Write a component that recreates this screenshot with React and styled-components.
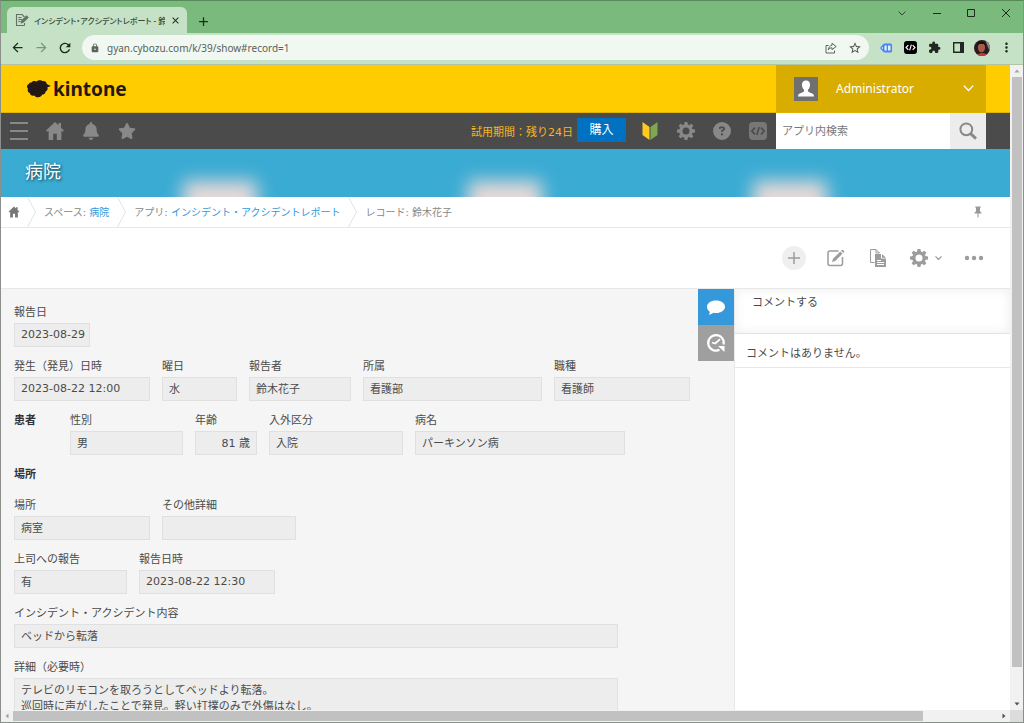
import React, { useState } from 'react';
import styled, { createGlobalStyle, css } from 'styled-components';
import {
  MdAdd, MdArrowBack, MdArrowForward, MdClose, MdExtension, MdLock, MdMoreVert, MdRefresh, MdStarBorder,
} from 'react-icons/md';
import { FaBell, FaStar, FaCircleQuestion } from 'react-icons/fa6';

const GlobalStyle = createGlobalStyle`
  * { box-sizing: border-box; }
  body {
    margin: 0;
    overflow: hidden;
    font-family: "DejaVu Sans", "Noto Sans CJK JP", sans-serif;
    font-size: 11px;
    color: #4b4b4b;
  }
  button, input, textarea { font: inherit; color: inherit; border: 0; border-radius: 0; margin: 0; padding: 0; }
  button { background: none; cursor: pointer; }
  a { text-decoration: none; }
  svg { display: block; flex: none; }
`;

/* ---------- browser ---------- */

const BrowserWindow = styled.div`
  display: flex;
  flex-direction: column;
  height: 100vh;
  border: 1px solid #8b8f8b;
  border-top-color: #568a59;
`;

const TabStrip = styled.div`
  display: flex;
  align-items: flex-end;
  height: 32px;
  flex: none;
  padding-left: 6px;
  background: #7abb7d;
`;

const Tab = styled.div`
  display: flex;
  align-items: center;
  gap: 5px;
  width: 180px;
  height: 26px;
  padding: 0 7px 0 8px;
  border-radius: 6px 6px 0 0;
  background: #c5e2c6;
`;

const TabTitle = styled.span`
  flex: 1;
  overflow: hidden;
  white-space: nowrap;
  font-family: "Noto Sans", "Noto Sans CJK JP", sans-serif;
  font-size: 8px;
  font-weight: 500;
  font-feature-settings: "palt";
  color: #3c4a3d;
`;

const ChromeButton = styled.button`
  display: grid;
  place-items: center;
  width: ${({ $w }) => $w || 24}px;
  height: 24px;
  flex: none;
  color: ${({ $color }) => $color || '#202821'};
`;

const WindowControls = styled.div`
  display: flex;
  align-self: flex-start;
  margin-left: auto;
`;

const AddressRow = styled.div`
  display: flex;
  align-items: center;
  height: 31px;
  flex: none;
  padding: 0 5px 2px 4px;
  background: #c5e2c6;
`;

const AddressBar = styled.div`
  display: flex;
  align-items: center;
  flex: 1;
  height: 25px;
  margin: 0 5px;
  padding: 0 2px 0 8px;
  border-radius: 13px;
  background: #f0f8f1;
  color: #5c645d;
`;

const AddressInput = styled.input`
  flex: 1;
  min-width: 0;
  margin-left: 7px;
  background: transparent;
  font-family: "Noto Sans", sans-serif;
  font-size: 10px;
  color: #59625a;
  outline: 0;
`;

const Avatar = styled.svg`
  width: 16px;
  height: 16px;
  border-radius: 50%;
`;

const Viewport = styled.div`
  display: flex;
  flex: 1;
  min-height: 0;
  border-top: 1px solid #b3c4a0;
`;

const Page = styled.div`
  display: flex;
  flex-direction: column;
  flex: 1;
  min-width: 0;
  background: #fff;
`;

const ScrollTrack = styled.div`
  display: flex;
  align-items: center;
  flex: none;
  background: #f1f1f1;
  ${({ $vertical }) => ($vertical ? css`
    flex-direction: column;
    width: 13px;
  ` : css`
    height: 12px;
  `)}
`;

const ScrollThumb = styled.div`
  background: #c1c1c1;
  flex: ${({ $size }) => $size} 0 0;
  ${({ $vertical }) => ($vertical ? 'width: 10px;' : 'height: 10px;')}
`;

const ScrollRest = styled.div`
  flex: ${({ $size }) => $size} 0 0;
`;

const BottomScroll = styled.div`
  display: flex;
  flex: none;
`;

const ScrollCorner = styled.div`
  width: 13px;
  background: #dcdcdc;
`;

/* ---------- kintone header ---------- */

const BrandBar = styled.header`
  display: flex;
  height: 48px;
  flex: none;
  padding-right: 24px;
  background: #ffcc00;
  border-bottom: 1px solid #dfb300;
`;

const Logo = styled.a`
  display: flex;
  align-items: center;
  gap: 2px;
  padding-left: 26px;
  font-family: "Noto Sans", sans-serif;
  font-size: 19px;
  font-weight: 700;
  line-height: 24px;
  color: #231815;
`;

const UserMenu = styled.button`
  display: flex;
  align-items: center;
  width: 210px;
  margin-left: auto;
  padding: 0 12px 0 18px;
  background: #d9ad00;
  font-family: "Noto Sans", sans-serif;
  font-size: 12px;
  color: #fff;
  text-align: left;
`;

const UserName = styled.span`
  flex: 1;
  padding-left: 18px;
`;

const NavBar = styled.nav`
  display: flex;
  align-items: center;
  height: 36px;
  flex: none;
  padding-right: 24px;
  background: #4b4b4b;
`;

const NavButton = styled.button`
  display: grid;
  place-items: center;
  width: 36px;
  height: 36px;
  color: #888;
`;

const Trial = styled.span`
  margin-left: auto;
  color: #f5b51d;
`;

const BuyButton = styled.button`
  width: 49px;
  height: 24px;
  margin: 0 6px 2px 4px;
  background: #0072c1;
  font-size: 12px;
  line-height: 22px;
  color: #fff;
`;

const Search = styled.form`
  display: flex;
  width: 210px;
  height: 36px;
`;

const SearchInput = styled.input`
  flex: 1;
  min-width: 0;
  padding: 0 6px;
  background: #fff;
  &::placeholder { color: #777; opacity: 1; }
`;

const SearchButton = styled.button`
  display: grid;
  place-items: center;
  width: 36px;
  background: #ececec;
  color: #888;
`;

const Banner = styled.div`
  position: relative;
  display: flex;
  align-items: center;
  height: 48px;
  flex: none;
  padding: 0 24px 6px;
  overflow: hidden;
  background: #3aabd3;
`;

const BannerArt = styled.svg`
  position: absolute;
  inset: 0;
`;

const BannerTitle = styled.h1`
  position: relative;
  margin: 0;
  font-size: 18px;
  font-weight: 400;
  color: #fff;
  text-shadow: 1px 1px 3px rgba(0, 0, 0, 0.7);
`;

const Breadcrumbs = styled.nav`
  display: flex;
  align-items: center;
  height: 31px;
  flex: none;
  padding: 0 24px 0 7px;
  border-bottom: 1px solid #e8e8e8;
  font-size: 10px;
  color: #888;
`;

const HomeLink = styled.a`
  padding-right: 7px;
  color: #777;
`;

const Crumb = styled.span`
  padding: 0 8px 2px;
  white-space: pre;
  a { color: #3498db; }
`;

const PinButton = styled.button`
  width: 12px;
  margin-left: auto;
  color: #999;
`;

const ActionBar = styled.div`
  display: flex;
  align-items: center;
  justify-content: flex-end;
  height: 61px;
  flex: none;
  padding-right: 24px;
  border-bottom: 1px solid #e8e8e8;
  color: #9c9c9c;
`;

const ActionButton = styled.button`
  display: flex;
  align-items: center;
  justify-content: center;
  gap: 7px;
  width: ${({ $w }) => $w || 24}px;
  height: 24px;
  margin-left: ${({ $gap }) => $gap || 18}px;
  border-radius: 12px;
  background: ${({ $filled }) => ($filled ? '#efefef' : 'none')};
`;

/* ---------- record ---------- */

const Content = styled.main`
  display: flex;
  flex: 1;
  min-height: 0;
`;

const Record = styled.section`
  flex: 1;
  min-width: 0;
  overflow: hidden;
  padding: 14px 0 0 13px;
  background: #f5f5f5;
`;

const FieldRow = styled.div`
  display: flex;
  gap: 12px;
  margin-bottom: 10px;
`;

const Heading = styled.h2`
  width: 44px;
  margin: 0;
  font-size: 11px;
  font-weight: 700;
  line-height: 19px;
  color: #333;
`;

const SectionHeading = styled(Heading)`
  width: auto;
  line-height: 20px;
  margin-bottom: 11px;
`;

const FieldBox = styled.div`
  flex: none;
  width: ${({ $w }) => $w}px;
`;

const FieldLabel = styled.label`
  display: block;
  height: 20px;
  line-height: 19px;
  white-space: nowrap;
`;

const valueStyle = css`
  display: block;
  width: 100%;
  border: 1px solid #e0e0e0;
  background: #ededed;
  outline: 0;
`;

const FieldValue = styled.input`
  ${valueStyle}
  height: 24px;
  padding: 0 ${({ $right }) => ($right ? 6 : 2)}px 2px 6px;
  text-align: ${({ $right }) => ($right ? 'right' : 'left')};
`;

const FieldText = styled.textarea`
  ${valueStyle}
  height: 72px;
  padding: 4px 6px;
  line-height: 16px;
  resize: none;
`;

/* ---------- comments ---------- */

const SideTabs = styled.div`
  flex: none;
  width: 36px;
  background: #f5f5f5;
`;

const SideTab = styled.button`
  display: grid;
  place-items: center;
  width: 36px;
  height: 36px;
  background: ${({ $active }) => ($active ? '#3498db' : '#9f9f9f')};
  color: #fff;
`;

const Comments = styled.aside`
  flex: none;
  width: 276px;
  border-left: 1px solid #e8e8e8;
`;

const CommentInput = styled.textarea`
  display: block;
  width: 100%;
  height: 45px;
  padding: 6px 17px;
  border-bottom: 1px solid #e3e3e3;
  box-shadow: inset 0 0 12px #eee;
  line-height: 16px;
  resize: none;
  outline: 0;
  &::placeholder { color: #4b4b4b; opacity: 1; }
`;

const EmptyComments = styled.p`
  margin: 0;
  padding: 12px 11px 5px;
  border-bottom: 1px solid #e8e8e8;
  line-height: 16px;
`;

/* ---------- icons ---------- */

const Chevron = ({ w = 10, stroke = 1.3 }) => (
  <svg width={w} height={w * 0.6} viewBox="0 0 10 6" fill="none" stroke="currentColor" strokeWidth={stroke}>
    <path d="M.7.6 5 5 9.3.6" />
  </svg>
);

const HomeIcon = ({ size = 20 }) => (
  <svg width={size} height={size} viewBox="0 0 20 20" fill="currentColor">
    <path d="M10 1 1 9.6l1.2 1.2L3.6 9.7V19h4.6v-6.2h3.6V19h4.6V9.7l1.4 1.1L19 9.6l-3-2.9V2h-2.6v2.2z" />
  </svg>
);

const teeth = [0, 45, 90, 135, 180, 225, 270, 315];

const GearIcon = () => (
  <svg width="18" height="18" viewBox="-9 -9 18 18" fill="currentColor">
    <circle r="5.1" fill="none" stroke="currentColor" strokeWidth="3.2" />
    {teeth.map((deg) => <path key={deg} d="M-2-6-1.4-9h2.8L2-6z" transform={`rotate(${deg})`} />)}
  </svg>
);

const CodeIcon = ({ size, bg, color, r = 4 }) => (
  <svg width={size} height={size} viewBox="0 0 18 18">
    <rect width="18" height="18" rx={r} fill={bg} />
    <path d="M6 5.6 2.8 9 6 12.4M12 5.6 15.2 9 12 12.4M10.2 5 7.8 13" fill="none" stroke={color} strokeWidth="1.6" />
  </svg>
);

const TabIcon = () => (
  <svg width="14" height="14" viewBox="0 0 14 14" fill="none" stroke="#647065" strokeWidth="1.1">
    <path d="M9.5 12.5H1.5V1.5H7L9.5 4" />
    <path d="M3.3 4.5H6.5M3.3 6.5H7M3.3 8.5H5.5M9.5 10V12.5" />
    <path d="M6.3 9.8 7 7.6 11.6 3.1 13 4.4 8.4 9z" fill="#647065" />
  </svg>
);

const ShareIcon = () => (
  <svg width="12" height="12" viewBox="0 0 12 12" fill="none" stroke="currentColor">
    <path d="M3.5 3.5H1v7.5h8.500V8.5M7 1.3l4.200 3.200L7 7.600V5.800C5.300 5.800 4.200 6.400 3.200 8c.3-2.500 1.500-4.400 3.800-4.800z" />
  </svg>
);

const TagIcon = () => (
  <svg width="12" height="10" viewBox="0 0 12 10">
    <path d="M0 5 3 1.5Q4 .5 5 .5h5.500Q12 .5 12 2v6q0 1.500-1.500 1.500H5Q4 9.500 3 8.500z" fill="#4285f4" />
    <path d="M4.500 2.500h2.200v5H4.500zM8 2.500h2.500v5H8z" fill="#e5effc" />
    <circle cx="2.4" cy="5" r=".8" fill="#fff" />
  </svg>
);

const CloudLogo = () => (
  <svg width="24" height="18" viewBox="0 0 24 18" fill="#231815">
    <path d="M4.500 2.500C6 .6 8.500.8 9.600 1.600 11-.2 14.300-.2 15.600 1.300c1.800-.6 3.400.2 4 2.200.8 1 1.600 1.800 4.200 2.200-1 1-2.200 1.200-3.300 1.300.6 2.200-.3 4-1.900 4.600-.2 2.300-1.700 3.300-3.400 3-.9 2-2.500 2.900-4.100 2.700-1.700.1-2.800-.6-3.500-1.900-2.400 1-4.500-.4-4.800-2.500C.8 12.400.2 10.400 1 8.800-.6 7-.1 4.800 1.600 4.200c.6-1.200 1.600-1.800 2.900-1.700z" />
  </svg>
);

const UserIcon = () => (
  <svg width="24" height="24" viewBox="0 0 24 24">
    <rect width="24" height="24" fill="#707070" />
    <path d="M12 3.500c2.700 0 4.300 1.900 4 4.700-.2 2.100-1 3.600-2 4.500v1.500c.8 1 2.600 1.500 4.200 2.200 1.200.5 1.800 1.500 1.800 3.100H4c0-1.600.6-2.600 1.800-3.100 1.600-.7 3.400-1.200 4.200-2.200v-1.500c-1-.9-1.800-2.400-2-4.500-.3-2.800 1.300-4.700 4-4.700z" fill="#fff" />
  </svg>
);

const BeginnerIcon = () => (
  <svg width="16" height="20" viewBox="0 0 16 20">
    <path d="M.5 1 7.500 6v13L.5 14z" fill="#ffc91f" />
    <path d="M15.500 1 8.500 6v13l7-5z" fill="#7fa650" />
  </svg>
);

const SearchIcon = () => (
  <svg width="18" height="18" viewBox="0 0 18 18" fill="none" stroke="currentColor" strokeWidth="2">
    <circle cx="7.3" cy="7.3" r="5.9" />
    <path d="m11.600 11.600 5.400 5" strokeWidth="2.8" />
  </svg>
);

const PinIcon = () => (
  <svg width="8" height="12" viewBox="0 0 8 12" fill="currentColor">
    <path d="M1.300.5h5.400v1.300H6v3.400l1.500 1.500v.8h-3V11.500h-1V7.500h-3v-.8L2 5.200V1.800h-.7z" />
  </svg>
);

const EditIcon = () => (
  <svg width="18" height="18" viewBox="0 0 18 18" fill="none" stroke="currentColor" strokeWidth="1.5">
    <path d="M11.500 2H3Q1 2 1 4v10.500q0 2 2 2h10.500q2 0 2-2V8" />
    <path d="M5 13 6 9.800 13.300 2.500 15.500 4.700 8.200 12z" fill="currentColor" stroke="none" />
    <path d="m14.100 1.700.8-.8q.5-.4 1 0l1.200 1.200q.4.500 0 1l-.8.800z" fill="currentColor" stroke="none" />
  </svg>
);

const CopyIcon = () => (
  <svg width="18" height="18" viewBox="0 0 18 18">
    <path d="M5.500 13.500h-4V.500H7L10.500 4" fill="none" stroke="currentColor" />
    <path d="M7 .5V4h3.500" fill="none" stroke="currentColor" />
    <path d="M6 5h6v4.500h5V18H6zM13 5l4 3.700h-4z" fill="currentColor" />
    <path d="M8 11.500h4M8 13.500h7M8 15.500h7" stroke="#fff" />
  </svg>
);

const BubbleIcon = () => (
  <svg width="20" height="18" viewBox="0 0 20 18" fill="currentColor">
    <path d="M10 2.500c5 0 9 2.600 9 6.200s-4 6.300-9 6.300c-1 0-1.800-.1-2.600-.3C6 15.900 4.500 16.500 2.600 16.500c.9-.9 1.200-1.800 1.200-2.800C2 12.500 1 10.800 1 8.700 1 5.100 5 2.500 10 2.500z" />
  </svg>
);

const HistoryIcon = () => (
  <svg width="20" height="20" viewBox="0 0 20 20" fill="none" stroke="currentColor" strokeWidth="2.2">
    <path d="M13.500 16.800A7.800 7.800 0 1 1 17.600 11.500" />
    <path d="M12 13h6.500v6z" fill="currentColor" stroke="none" />
    <path d="M14 6.200 9.300 10.500 6 9.500" strokeWidth="1.8" />
  </svg>
);

const CrumbArrow = () => (
  <svg width="9" height="30" viewBox="0 0 9 30" fill="none" stroke="#dfe5e5">
    <path d="M.5 0 8.500 15 .5 30" />
  </svg>
);

const ScrollArrow = ({ turn = 0, color = '#505050' }) => (
  <svg width="12" height="12" viewBox="-6 -6 12 12" fill={color}>
    <path d="M-2.500 1.500 0-1.500 2.500 1.500z" transform={`rotate(${turn})`} />
  </svg>
);

/* ---------- app ---------- */

const rows = [
  { fields: [{ id: 'reportDate', label: '報告日', value: '2023-08-29', w: 76 }] },
  {
    fields: [
      { id: 'occurredAt', label: '発生（発見）日時', value: '2023-08-22 12:00', w: 136 },
      { id: 'weekday', label: '曜日', value: '水', w: 75 },
      { id: 'reporter', label: '報告者', value: '鈴木花子', w: 102 },
      { id: 'department', label: '所属', value: '看護部', w: 179 },
      { id: 'job', label: '職種', value: '看護師', w: 136 },
    ],
  },
  {
    heading: '患者',
    fields: [
      { id: 'gender', label: '性別', value: '男', w: 113 },
      { id: 'age', label: '年齢', value: '81 歳', w: 62, right: true },
      { id: 'admission', label: '入外区分', value: '入院', w: 134 },
      { id: 'disease', label: '病名', value: 'パーキンソン病', w: 210 },
    ],
  },
  { section: '場所' },
  {
    fields: [
      { id: 'place', label: '場所', value: '病室', w: 136 },
      { id: 'placeDetail', label: 'その他詳細', value: '', w: 134 },
    ],
  },
  {
    fields: [
      { id: 'escalated', label: '上司への報告', value: '有', w: 113 },
      { id: 'escalatedAt', label: '報告日時', value: '2023-08-22 12:30', w: 136 },
    ],
  },
  { fields: [{ id: 'incident', label: 'インシデント・アクシデント内容', value: 'ベッドから転落', w: 604 }] },
  {
    fields: [{
      id: 'detail',
      label: '詳細（必要時）',
      value: 'テレビのリモコンを取ろうとしてベッドより転落。\n巡回時に声がしたことで発見。軽い打撲のみで外傷はなし。',
      w: 604,
      multiline: true,
    }],
  },
];

const Field = ({ id, label, value, w, right, multiline }) => (
  <FieldBox $w={w}>
    <FieldLabel htmlFor={id}>{label}</FieldLabel>
    {multiline
      ? <FieldText id={id} value={value} readOnly />
      : <FieldValue id={id} value={value} $right={right} readOnly />}
  </FieldBox>
);

const BrowserChrome = () => (
  <>
    <TabStrip>
      <Tab>
        <TabIcon />
        <TabTitle>インシデント・アクシデントレポート - 鈴</TabTitle>
        <ChromeButton $w={10} aria-label="タブを閉じる"><MdClose size={11} /></ChromeButton>
      </Tab>
      <ChromeButton $w={32} aria-label="新しいタブ"><MdAdd size={15} /></ChromeButton>
      <WindowControls>
        <ChromeButton $w={35} aria-label="タブを検索"><Chevron w={8} stroke={1} /></ChromeButton>
        <ChromeButton $w={35} aria-label="最小化">
          <svg width="8" height="8" viewBox="0 0 8 8"><path d="M0 4.500h8" stroke="currentColor" /></svg>
        </ChromeButton>
        <ChromeButton $w={34} aria-label="最大化">
          <svg width="8" height="8" viewBox="0 0 8 8"><path d="M.5.5h7v7h-7z" fill="none" stroke="currentColor" /></svg>
        </ChromeButton>
        <ChromeButton $w={35} aria-label="閉じる">
          <svg width="8" height="8" viewBox="0 0 8 8"><path d="m0 0 8 8M8 0 0 8" stroke="currentColor" /></svg>
        </ChromeButton>
      </WindowControls>
    </TabStrip>
    <AddressRow>
      <ChromeButton aria-label="戻る"><MdArrowBack size={15} /></ChromeButton>
      <ChromeButton $color="#81907f" aria-label="進む"><MdArrowForward size={15} /></ChromeButton>
      <ChromeButton aria-label="再読み込み"><MdRefresh size={16} /></ChromeButton>
      <AddressBar>
        <MdLock size={10} />
        <AddressInput aria-label="アドレス" defaultValue="gyan.cybozu.com/k/39/show#record=1" />
        <ChromeButton $color="#5c645d" aria-label="共有"><ShareIcon /></ChromeButton>
        <ChromeButton $color="#4c544d" aria-label="ブックマーク"><MdStarBorder size={14} /></ChromeButton>
      </AddressBar>
      <ChromeButton aria-label="タグ"><TagIcon /></ChromeButton>
      <ChromeButton aria-label="コード"><CodeIcon size={13} bg="#000" color="#fff" /></ChromeButton>
      <ChromeButton aria-label="拡張機能"><MdExtension size={13} /></ChromeButton>
      <ChromeButton aria-label="サイドパネル">
        <svg width="11" height="11" viewBox="0 0 11 11">
          <path d="M.7.7h9.600v9.600H.7z" fill="none" stroke="currentColor" strokeWidth="1.4" />
          <path d="M7 0h4v11H7z" fill="currentColor" />
        </svg>
      </ChromeButton>
      <ChromeButton aria-label="プロフィール">
        <Avatar viewBox="0 0 16 16">
          <rect width="16" height="16" fill="#2a1c1c" />
          <path d="M11 0h5v12z" fill="#8f8884" />
          <ellipse cx="7.5" cy="7.5" rx="3.6" ry="4.8" fill="#a85b48" />
          <path d="M3 6C3 2 6 1 8 1.500S12 3 11.500 6L10 4H5z" fill="#180f10" />
          <path d="M3 16q1-3 5-3t6 3z" fill="#c9383c" />
        </Avatar>
      </ChromeButton>
      <ChromeButton aria-label="メニュー"><MdMoreVert size={15} /></ChromeButton>
    </AddressRow>
  </>
);

const Header = () => (
  <>
    <BrandBar>
      <Logo href="#home"><CloudLogo />kintone</Logo>
      <UserMenu>
        <UserIcon />
        <UserName>Administrator</UserName>
        <Chevron w={11} stroke={1.2} />
      </UserMenu>
    </BrandBar>
    <NavBar>
      <NavButton aria-label="メニュー">
        <svg width="18" height="18" viewBox="0 0 18 18"><path d="M0 1h18M0 9h18M0 17h18" stroke="currentColor" strokeWidth="2" /></svg>
      </NavButton>
      <NavButton aria-label="ホーム"><HomeIcon /></NavButton>
      <NavButton aria-label="通知"><FaBell size={18} /></NavButton>
      <NavButton aria-label="お気に入り"><FaStar size={18} /></NavButton>
      <Trial>試用期間：残り24日</Trial>
      <BuyButton>購入</BuyButton>
      <NavButton aria-label="はじめてガイド"><BeginnerIcon /></NavButton>
      <NavButton aria-label="設定"><GearIcon /></NavButton>
      <NavButton aria-label="ヘルプ"><FaCircleQuestion size={18} /></NavButton>
      <NavButton aria-label="開発"><CodeIcon size={18} bg="#777" color="#4b4b4b" /></NavButton>
      <Search onSubmit={(e) => e.preventDefault()}>
        <SearchInput aria-label="アプリ内検索" placeholder="アプリ内検索" />
        <SearchButton aria-label="検索"><SearchIcon /></SearchButton>
      </Search>
    </NavBar>
    <Banner>
      <BannerArt width="100%" height="48" aria-hidden="true">
        <defs>
          <filter id="soft" x="-50%" y="-100%" width="200%" height="300%"><feGaussianBlur stdDeviation="9" /></filter>
        </defs>
        {[182, 467, 752].map((x) => (
          <rect key={x} x={x} y="32" width="74" height="44" fill="#e8d9d8" filter="url(#soft)" />
        ))}
      </BannerArt>
      <BannerTitle>病院</BannerTitle>
    </Banner>
    <Breadcrumbs>
      <HomeLink href="#home" aria-label="ホーム"><HomeIcon size={12} /></HomeLink>
      <CrumbArrow />
      <Crumb>スペース: <a href="#space">病院</a></Crumb>
      <CrumbArrow />
      <Crumb>アプリ: <a href="#app">インシデント・アクシデントレポート</a></Crumb>
      <CrumbArrow />
      <Crumb>レコード: 鈴木花子</Crumb>
      <PinButton aria-label="固定"><PinIcon /></PinButton>
    </Breadcrumbs>
    <ActionBar>
      <ActionButton $filled aria-label="追加">
        <svg width="12" height="12" viewBox="0 0 12 12"><path d="M0 6h12M6 0v12" stroke="currentColor" strokeWidth="1.5" /></svg>
      </ActionButton>
      <ActionButton aria-label="編集"><EditIcon /></ActionButton>
      <ActionButton aria-label="複製"><CopyIcon /></ActionButton>
      <ActionButton $w={32} $gap={20} aria-label="設定"><GearIcon /><Chevron w={7} stroke={1.8} /></ActionButton>
      <ActionButton $w={24} $gap={20} aria-label="その他">
        <svg width="20" height="6" viewBox="0 0 20 6" fill="currentColor">
          <circle cx="3" cy="3" r="2.2" />
          <circle cx="10" cy="3" r="2.2" />
          <circle cx="17" cy="3" r="2.2" />
        </svg>
      </ActionButton>
    </ActionBar>
  </>
);

function App() {
  const [tab, setTab] = useState('comment');

  return (
    <>
      <GlobalStyle />
      <BrowserWindow>
        <BrowserChrome />
        <Viewport>
          <Page>
            <Header />
            <Content>
              <Record>
                {rows.map((row, i) => (row.section
                  ? <SectionHeading key={i}>{row.section}</SectionHeading>
                  : (
                    <FieldRow key={i}>
                      {row.heading && <Heading>{row.heading}</Heading>}
                      {row.fields.map((field) => <Field key={field.id} {...field} />)}
                    </FieldRow>
                  )))}
              </Record>
              <SideTabs>
                <SideTab $active={tab === 'comment'} onClick={() => setTab('comment')} aria-label="コメント">
                  <BubbleIcon />
                </SideTab>
                <SideTab $active={tab === 'history'} onClick={() => setTab('history')} aria-label="変更履歴">
                  <HistoryIcon />
                </SideTab>
              </SideTabs>
              <Comments>
                <CommentInput aria-label="コメントする" placeholder="コメントする" />
                <EmptyComments>コメントはありません。</EmptyComments>
              </Comments>
            </Content>
          </Page>
          <ScrollTrack $vertical>
            <ScrollArrow color="#a3a3a3" />
            <ScrollThumb $vertical $size={95} />
            <ScrollRest $size={5} />
            <ScrollArrow turn={180} />
          </ScrollTrack>
        </Viewport>
        <BottomScroll>
          <ScrollTrack style={{ flex: 1 }}>
            <ScrollArrow turn={-90} color="#a3a3a3" />
            <ScrollThumb $size={924} />
            <ScrollRest $size={76} />
            <ScrollArrow turn={90} />
          </ScrollTrack>
          <ScrollCorner />
        </BottomScroll>
      </BrowserWindow>
    </>
  );
}

export default App;
